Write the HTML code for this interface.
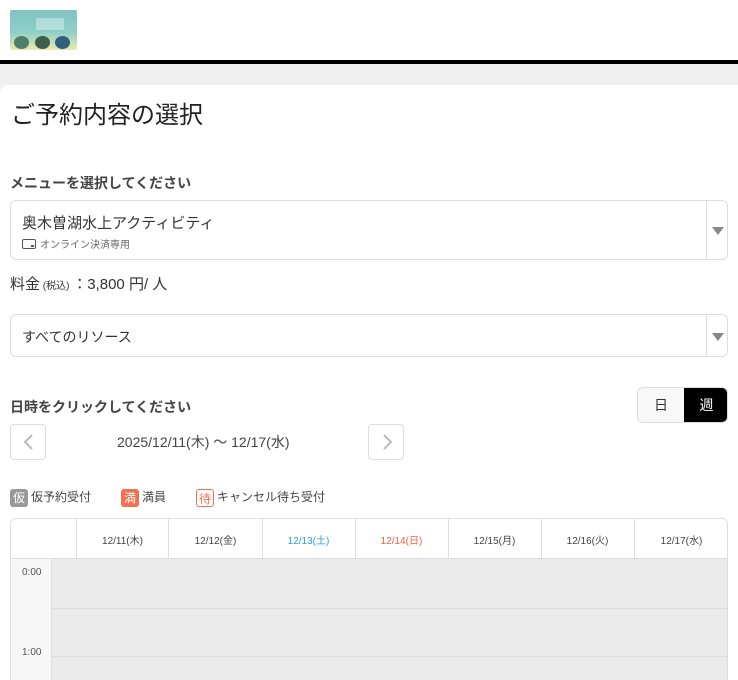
<!DOCTYPE html>
<html><head><meta charset="utf-8"><style>
*{box-sizing:border-box;margin:0;padding:0}
html,body{width:738px;height:680px;overflow:hidden}
body{background:#f0f0f0;font-family:"Liberation Sans","Noto Sans CJK JP",sans-serif;color:#333;position:relative}
.abs{position:absolute}
.hdr{left:0;top:0;width:738px;height:60px;background:#fff}
.logo{left:10px;top:10px;width:67px;height:40px;background:linear-gradient(180deg,#7fc3c0 0%,#8fcfc8 55%,#e8eab0 100%);border-radius:2px}
.bar{left:0;top:60px;width:738px;height:4px;background:#000}
.card{left:0;top:85px;width:738px;height:600px;background:#fff;border-radius:8px 0 0 0}
.sel{left:10px;width:718px;border:1px solid #ddd;border-radius:6px;background:#fff}
.arr{position:absolute;right:0;top:0;bottom:0;width:21px;border-left:1px solid #ddd}
.arr:after{content:"";position:absolute;left:5px;top:50%;margin-top:-3px;border-left:6px solid transparent;border-right:6px solid transparent;border-top:8px solid #888}
.nav{width:36px;height:36px;border:1px solid #ddd;border-radius:4px}
.nav svg{position:absolute;left:10px;top:8px}
.badge{display:inline-block;width:18px;height:18px;border-radius:3px;color:#fff;font-size:12px;text-align:center;line-height:18px;vertical-align:middle;margin-right:3px}
</style></head><body>
<div class="abs hdr"></div>
<div class="abs logo">
<div class="abs" style="left:4px;top:26px;width:15px;height:13px;border-radius:50%;background:#4f7d6a"></div>
<div class="abs" style="left:25px;top:26px;width:15px;height:13px;border-radius:50%;background:#3f5d4c"></div>
<div class="abs" style="left:45px;top:26px;width:15px;height:13px;border-radius:50%;background:#2f5f7c"></div>
<div class="abs" style="left:26px;top:8px;width:28px;height:12px;background:rgba(255,255,255,.35)"></div>
</div>
<div class="abs bar"></div>
<div class="abs card"></div>
<div class="abs" style="left:11px;top:95px;font-size:24px;color:#222">ご予約内容の選択</div>
<div class="abs" style="left:10px;top:173px;font-size:14px;font-weight:bold;color:#444">メニューを選択してください</div>
<div class="abs sel" style="top:200px;height:60px">
<div class="abs" style="left:11px;top:11px;font-size:15px;color:#333">奥木曽湖水上アクティビティ</div>
<div class="abs" style="left:11px;top:35px;font-size:10px;color:#666"><span style="display:inline-block;width:14px;height:10px;border:1.3px solid #555;border-radius:2px;vertical-align:-1px;margin-right:4px;position:relative"><span style="position:absolute;right:1px;bottom:1px;width:3px;height:2px;background:#555"></span></span>オンライン決済専用</div>
<div class="arr"></div></div>
<div class="abs" style="left:10px;top:273px;font-size:15px;color:#333">料金<span style="font-size:10px"> (税込) </span>：3,800 円/ 人</div>
<div class="abs sel" style="top:314px;height:43px">
<div class="abs" style="left:11px;top:12px;font-size:14px;color:#333">すべてのリソース</div>
<div class="arr"></div></div>
<div class="abs" style="left:10px;top:397px;font-size:14px;font-weight:bold;color:#444">日時をクリックしてください</div>
<div class="abs" style="left:637px;top:387px;width:91px;height:36px;border:1px solid #ddd;border-radius:6px;overflow:hidden;background:#f8f8f8">
<div class="abs" style="left:0;top:0;width:46px;height:34px;text-align:center;line-height:34px;font-size:14px">日</div>
<div class="abs" style="left:46px;top:0;width:45px;height:34px;background:#000;color:#fff;text-align:center;line-height:34px;font-size:14px">週</div></div>
<div class="abs nav" style="left:10px;top:424px"><svg width="16" height="18" viewBox="0 0 16 18"><path d="M11 2 L4 9 L11 16" fill="none" stroke="#bbb" stroke-width="2"/></svg></div>
<div class="abs nav" style="left:368px;top:424px"><svg width="16" height="18" viewBox="0 0 16 18"><path d="M5 2 L12 9 L5 16" fill="none" stroke="#bbb" stroke-width="2"/></svg></div>
<div class="abs" style="left:117px;top:432px;font-size:14px;color:#444">2025/12/11(木) 〜 12/17(水)</div>
<div class="abs" style="left:10px;top:488px;font-size:12px;color:#444;white-space:nowrap"><span class="badge" style="background:#999">仮</span>仮予約受付<span style="display:inline-block;width:30px"></span><span class="badge" style="background:#f0704f">満</span>満員<span style="display:inline-block;width:30px"></span><span class="badge" style="background:#fff;color:#f0704f;border:1px solid #f0704f">待</span>キャンセル待ち受付</div>
<div class="abs" style="left:10px;top:518px;width:718px;height:170px;border:1px solid #ddd;border-radius:6px 6px 0 0;overflow:hidden">
<div class="abs" style="left:0;top:39px;width:718px;height:140px;background:#eaeaea"></div>
<div class="abs" style="left:0;top:39px;width:41px;height:140px;background:#f7f7f7;border-right:1px solid #ddd"></div>
<div class="abs" style="left:0;top:39px;width:718px;border-top:1px solid #ddd"></div>
<div class="abs" style="left:41px;top:89px;width:677px;border-top:1px dotted #ccc"></div>
<div class="abs" style="left:41px;top:137px;width:677px;border-top:1px solid #ddd"></div>
<div class="abs" style="left:11px;top:48px;font-size:10px;color:#555">0:00</div>
<div class="abs" style="left:11px;top:128px;font-size:10px;color:#555">1:00</div>
<div class="abs" style="left:65px;top:0;width:1px;height:39px;background:#ddd"></div>
<div class="abs" style="left:157px;top:0;width:1px;height:39px;background:#ddd"></div>
<div class="abs" style="left:251px;top:0;width:1px;height:39px;background:#ddd"></div>
<div class="abs" style="left:344px;top:0;width:1px;height:39px;background:#ddd"></div>
<div class="abs" style="left:437px;top:0;width:1px;height:39px;background:#ddd"></div>
<div class="abs" style="left:530px;top:0;width:1px;height:39px;background:#ddd"></div>
<div class="abs" style="left:623px;top:0;width:1px;height:39px;background:#ddd"></div>
<div class="abs" style="top:13px;left:65px;width:93px;text-align:center;font-size:10px;color:#444">12/11(木)</div>
<div class="abs" style="top:13px;left:158px;width:93px;text-align:center;font-size:10px;color:#444">12/12(金)</div>
<div class="abs" style="top:13px;left:251px;width:93px;text-align:center;font-size:10px;color:#29a0e0">12/13(土)</div>
<div class="abs" style="top:13px;left:344px;width:93px;text-align:center;font-size:10px;color:#f06040">12/14(日)</div>
<div class="abs" style="top:13px;left:437px;width:93px;text-align:center;font-size:10px;color:#444">12/15(月)</div>
<div class="abs" style="top:13px;left:530px;width:93px;text-align:center;font-size:10px;color:#444">12/16(火)</div>
<div class="abs" style="top:13px;left:623px;width:95px;text-align:center;font-size:10px;color:#444">12/17(水)</div>
</div>
</body></html>
